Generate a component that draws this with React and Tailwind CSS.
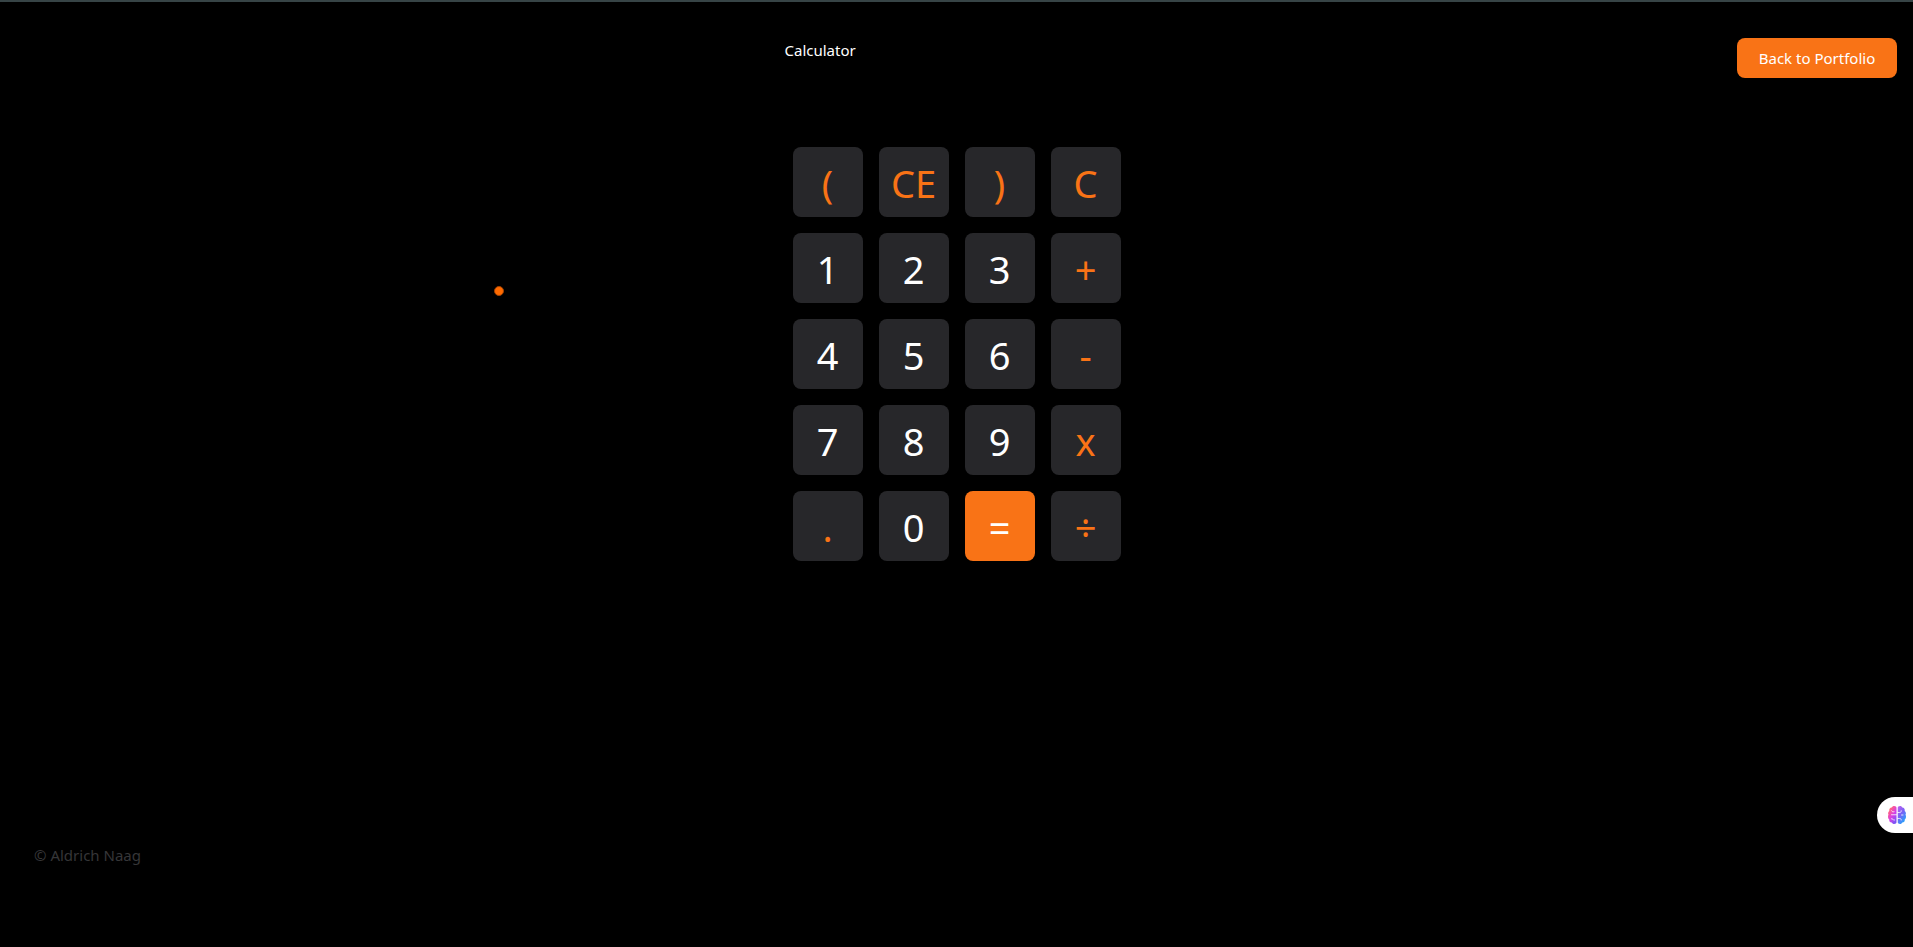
import React from "react";

const KEYS = [
  { label: "(", tone: "accent" },
  { label: "CE", tone: "accent" },
  { label: ")", tone: "accent" },
  { label: "C", tone: "accent" },
  { label: "1", tone: "plain" },
  { label: "2", tone: "plain" },
  { label: "3", tone: "plain" },
  { label: "+", tone: "accent" },
  { label: "4", tone: "plain" },
  { label: "5", tone: "plain" },
  { label: "6", tone: "plain" },
  { label: "-", tone: "accent" },
  { label: "7", tone: "plain" },
  { label: "8", tone: "plain" },
  { label: "9", tone: "plain" },
  { label: "x", tone: "accent" },
  { label: ".", tone: "accent" },
  { label: "0", tone: "plain" },
  { label: "=", tone: "solid" },
  { label: "÷", tone: "accent" },
];

const TONES = {
  plain: "bg-[#27272a] text-white",
  accent: "bg-[#27272a] text-[#f97316]",
  solid: "bg-[#f97316] text-white",
};

function Key({ label, tone }) {
  return (
    <button
      type="button"
      className={`flex aspect-square items-center justify-center rounded-lg pt-0.5 text-[38px] leading-none ${TONES[tone]}`}
    >
      {label}
    </button>
  );
}

function BrainIcon() {
  return (
    <svg viewBox="0 0 36 36" className="h-[18px] w-[18px] shrink-0" aria-hidden="true">
      <defs>
        <linearGradient id="brain-left" x1="0" y1="0" x2="0.7" y2="1">
          <stop offset="0" stopColor="#ffa040" />
          <stop offset="0.3" stopColor="#fb5c90" />
          <stop offset="0.6" stopColor="#d83fe6" />
          <stop offset="1" stopColor="#7a55f5" />
        </linearGradient>
        <linearGradient id="brain-right" x1="0" y1="0" x2="0.6" y2="1">
          <stop offset="0" stopColor="#c060f0" />
          <stop offset="0.5" stopColor="#7a62f5" />
          <stop offset="1" stopColor="#25a5fb" />
        </linearGradient>
      </defs>
      <path
        fill="url(#brain-left)"
        d="M17 3.500v29c0 2-2 3.500-4.500 3.500-2.300 0-4.500-1.200-5.200-3C4 33 2 30.500 2.500 27 .8 25.500 0 23.500 0 21c0-1.500.4-2.500 1-3.500-.6-1-.8-2-.8-3 0-2 .8-3.500 2.300-4.500C2 6 4 3 7.300 3 8 1.200 10.200 0 12.500 0 15 0 17 1.500 17 3.500z"
      />
      <path
        fill="url(#brain-right)"
        d="M19.500 3.500v29c0 2 2 3.500 4.500 3.500 2.300 0 4-1.200 4.700-3 3.300 0 5.300-2.500 4.800-6 1.700-1.500 2.500-3.500 2.500-6 0-1.500-.4-2.500-1-3.500.6-1 .8-2 .8-3 0-2-.8-3.500-2.300-4.500.5-4-1.500-7-4.800-7C28 1.200 26.300 0 24 0c-2.500 0-4.500 1.500-4.500 3.500z"
      />
      <g fill="none" stroke="#fff" strokeWidth="1.600" strokeLinecap="round">
        <path d="M17 17.500H7M7 9.500c1 2 3 2.500 5 2M7 25.500c2 0 3 1 4 2.500h2" />
        <path d="M19.500 13h4c2 0 3-1 3-3.500M30 18h-3M19.500 25h4c2 0 3 1 3 3" />
      </g>
    </svg>
  );
}

export default function App() {
  return (
    <div className="flex min-h-screen flex-col border-t-2 border-[#374446] bg-black font-['Noto_Sans',sans-serif] text-[15px] leading-6 text-white">
      <header className="grid grid-cols-[1fr_344px_1fr] items-start px-4 pt-9">
        <h1 className="col-start-2">Calculator</h1>
        <a
          href="#portfolio"
          className="flex h-10 w-40 items-center justify-center justify-self-end rounded-lg bg-[#f97316]"
        >
          Back to Portfolio
        </a>
      </header>

      <main className="flex justify-center pt-[69px]">
        <div className="grid w-[328px] grid-cols-4 gap-4">
          {KEYS.map((key) => (
            <Key key={key.label} {...key} />
          ))}
        </div>
      </main>

      <footer className="mt-auto px-[34px] pb-20 text-[#363638]">© Aldrich Naag</footer>

      <span className="pointer-events-none fixed top-[286px] left-[494px] size-2.5 rounded-full border border-[#a04200] bg-[#ff6a00]" />
      <button
        type="button"
        aria-label="Open assistant"
        className="fixed right-0 bottom-[114px] flex h-9 w-9 items-center rounded-l-full bg-white pl-[11px]"
      >
        <BrainIcon />
      </button>
    </div>
  );
}
